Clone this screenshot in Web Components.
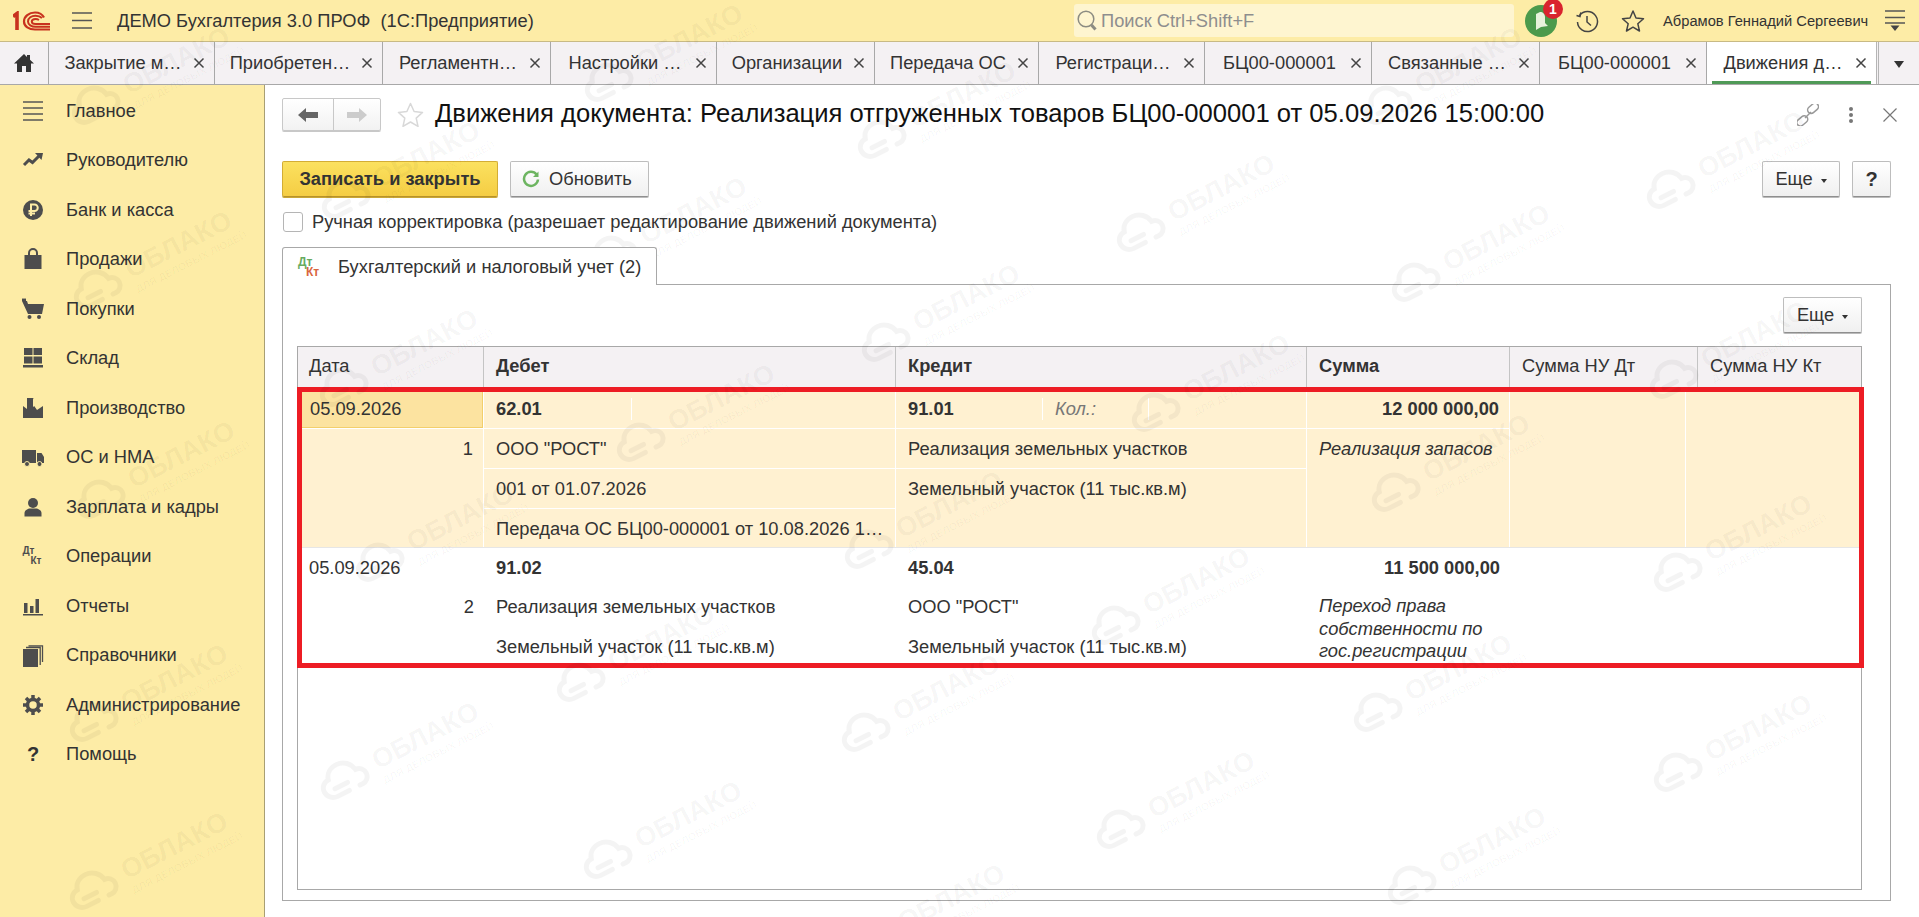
<!DOCTYPE html>
<html lang="ru">
<head>
<meta charset="utf-8">
<title>Движения документа</title>
<style>
  html, body { margin: 0; height: 100%; overflow: hidden; background: #fff; }
  body { font: 18.300px "Liberation Sans", Arial, sans-serif; color: #333; }
</style>
</head>
<body>
<app-shell>
  <top-bar slot="top"></top-bar>
  <tab-strip slot="tabs">
    <tab-item style="width:166px">Закрытие м…</tab-item>
    <tab-item style="width:168px">Приобретен…</tab-item>
    <tab-item style="width:168px">Регламентн…</tab-item>
    <tab-item style="width:166px">Настройки …</tab-item>
    <tab-item style="width:158px">Организации</tab-item>
    <tab-item style="width:164px">Передача ОС</tab-item>
    <tab-item style="width:166px">Регистраци…</tab-item>
    <tab-item style="width:167px">БЦ00-000001</tab-item>
    <tab-item style="width:168px">Связанные …</tab-item>
    <tab-item style="width:167px">БЦ00-000001</tab-item>
    <tab-item style="width:169px" active>Движения д…</tab-item>
  </tab-strip>
  <side-menu slot="side"></side-menu>
  <doc-view slot="main"></doc-view>
  <water-marks slot="over"></water-marks>
</app-shell>

<script>
// app frame: top bar, tabs, then sidebar + content
class AppShell extends HTMLElement {
  constructor() {
    super();
    this.attachShadow({ mode: 'open' });
    this.shadowRoot.innerHTML = `
      <style>
        :host { display: grid; position: relative; height: 917px; width: 1919px; overflow: hidden;
          grid-template-columns: 265px 1fr; grid-template-rows: 42px 43px 1fr; }
        .t { grid-column: 1 / 3; }
      </style>
      <div class="t"><slot name="top"></slot></div>
      <div class="t"><slot name="tabs"></slot></div>
      <slot name="side"></slot>
      <slot name="main"></slot>
      <slot name="over"></slot>`;
  }
}

class TopBar extends HTMLElement {
  constructor() {
    super();
    this.attachShadow({ mode: 'open' });
    this.shadowRoot.innerHTML = `
      <style>
        :host { display: flex; align-items: center; height: 41px; background: #fdeca6; border-bottom: 1px solid #c8ba84; color: #333; }
        svg { display: block; flex: none; }
        .logo { margin-left: 13px; }
        .burger { margin-left: 21px; }
        .name { margin-left: 25px; white-space: pre; width: 957px; }
        .search { display: flex; align-items: center; box-sizing: border-box; width: 440px; height: 33px; background: #fef5d0; border-radius: 3px; padding-left: 3px; color: #8e8e8e; }
        .search span { margin-left: 3px; }
        .bell { position: relative; margin-left: 11px; width: 32px; height: 32px; }
        .badge { position: absolute; left: 18px; top: -6px; width: 20px; height: 20px; border-radius: 50%; background: #d9232e; color: #fff; font: bold 14px/20px "Liberation Sans", sans-serif; text-align: center; }
        .hist { margin-left: 18px; }
        .star { margin-left: 22px; }
        .user { margin-left: 18px; font-size: 14.700px; white-space: nowrap; width: 222px; }
      </style>
      <svg class="logo" width="38" height="20" viewBox="0 0 38 20" fill="none" stroke="#c8321e">
        <path d="M0 5.500 4 2.500V19" stroke-width="3.600"/><path d="M31 6.500C29.500 3.500 26 1.500 22 1.500 16 1.500 11 5.500 11 10.500 11 15.500 16 18.500 22 18.500H37" stroke-width="2.200"/>
        <path d="M29 7C27.500 5.500 25 4.700 22.500 4.700 18.500 4.700 15 7 15 10.500 15 13.700 18.500 15.800 22.500 15.800H37" stroke-width="2"/>
        <path d="M26 9C25 8.400 24 8 22.700 8 20.500 8 18.800 9 18.800 10.500 18.800 12 20.500 13 22.700 13H37" stroke-width="2"/>
      </svg>
      <svg class="burger" width="20" height="17" viewBox="0 0 20 17" stroke="#555" stroke-width="1.600"><path d="M0 1h20M0 8.500h20M0 16h20"/></svg>
      <div class="name">ДЕМО Бухгалтерия 3.0 ПРОФ  (1С:Предприятие)</div>
      <div class="search">
        <svg width="21" height="23" viewBox="0 0 21 23" fill="none" stroke="#8c8c82" stroke-width="1.500"><circle cx="9" cy="10" r="7.800"/><path d="M14.500 16l4 4.500" stroke-width="3"/></svg>
        <span>Поиск Ctrl+Shift+F</span>
      </div>
      <div class="bell">
        <svg width="32" height="32" viewBox="0 0 32 32"><circle cx="16" cy="16" r="16" fill="#4c9a4c"/><path d="M11 25V9l4-2c3 0 5 2 5 5v6l3 3-7 1z" fill="#e8f2dc"/></svg>
        <div class="badge">1</div>
      </div>
      <svg class="hist" width="24" height="24" viewBox="0 0 24 24" fill="none" stroke="#444" stroke-width="1.500"><path d="M4.500 6.500A10 10 0 1 1 2.500 13"/><path d="M1.500 6.500l3.500 1 .8-4" /><path d="M12 7v6l4 3.500"/></svg>
      <svg class="star" width="24" height="24" viewBox="0 0 24 24" fill="none" stroke="#444" stroke-width="1.500" stroke-linejoin="round"><path d="M12 2l3 7 7.500.7-5.700 5 1.700 7.300L12 18.200 5.500 22l1.700-7.300-5.700-5L9 9z"/></svg>
      <div class="user">Абрамов Геннадий Сергеевич</div>
      <svg width="20" height="22" viewBox="0 0 20 22" stroke="#555" stroke-width="1.500"><path d="M0 1h20M0 7.500h20M0 13h20"/><path d="M5.500 15.500h9L10 21z" fill="#444" stroke="none"/></svg>`;
  }
}

class TabStrip extends HTMLElement {
  constructor() {
    super();
    this.attachShadow({ mode: 'open' });
    this.shadowRoot.innerHTML = `
      <style>
        :host { display: flex; height: 42px; background: #f4f1f3; border-bottom: 1px solid #a8a8a8; }
        .home { box-sizing: border-box; width: 49px; border-right: 1px solid #a8a8a8; display: flex; align-items: center; justify-content: center; }
        .more { flex: 1; border-left: 3px double #b5b5b5; display: flex; align-items: center; justify-content: center; }
        .more i { border: 5px solid transparent; border-top: 7px solid #333; border-bottom: 0; margin-top: 2px; }
      </style>
      <div class="home"><svg width="20" height="18" viewBox="0 0 20 18" fill="#333"><path d="M10 0 0 9.500h3V18h5v-6h4v6h5V9.500h3L16 5.800V1h-3v2z"/></svg></div>
      <slot></slot>
      <div class="more"><i></i></div>`;
  }
}

class TabItem extends HTMLElement {
  constructor() {
    super();
    this.attachShadow({ mode: 'open' });
    this.shadowRoot.innerHTML = `
      <style>
        :host { box-sizing: border-box; flex: none; display: flex; align-items: center; position: relative; border-right: 1px solid #a8a8a8; padding-left: 12px; padding-right: 9px; white-space: nowrap; color: #333; }
        :host([active]) { background: #fff; border-right: 0; }
        :host([active])::after { content: ""; position: absolute; left: 5px; right: 5px; bottom: 0; height: 3px; background: #4f9a57; }
        .txt { flex: 1; text-align: center; }
        svg { flex: none; margin-left: 8px; display: block; }
      </style>
      <div class="txt"><slot></slot></div>
      <svg width="12" height="12" viewBox="0 0 12 12" stroke="#444" stroke-width="1.500"><path d="M1.500 1.500l9 9M10.500 1.500l-9 9"/></svg>`;
  }
}

class MenuItem extends HTMLElement {
  constructor() {
    super();
    this.attachShadow({ mode: 'open' });
    this.shadowRoot.innerHTML = `
      <style>
        :host { display: flex; align-items: center; height: 49.500px; color: #333; }
        .ic { width: 66px; display: flex; justify-content: center; flex: none; }
      </style>
      <div class="ic"><slot name="icon"></slot></div>
      <slot></slot>`;
  }
}

const ICONS = {
  main: '<path d="M0 1h20M0 7h20M0 13h20M0 19h20" stroke="#555" stroke-width="1.500" fill="none"/>',
  chief: '<path d="M1 15l5-5 3.500 2.500L16 6" fill="none" stroke="#4d4d4d" stroke-width="3"/><path d="M12 3h8l-1.500 7z" fill="#4d4d4d"/>',
  bank: '<circle cx="10" cy="10" r="10" fill="#4d4d4d"/><path d="M8 16V4.500h3.500a3.200 3.200 0 0 1 0 6.500H5.500M5.500 13.500h6.500" fill="none" stroke="#fdeca6" stroke-width="2"/>',
  sales: '<path d="M1.500 6h17v14h-17z" fill="#4d4d4d"/><path d="M6 9V4a4 4 0 0 1 8 0v5" fill="none" stroke="#4d4d4d" stroke-width="2"/>',
  buy: '<path d="M-1 2h5l1 3h16l-2 10H5z" fill="#4d4d4d"/><path d="M-1 .8h4" stroke="#4d4d4d" stroke-width="2.500"/><circle cx="6.500" cy="18" r="2" fill="#4d4d4d"/><circle cx="16" cy="18" r="2" fill="#4d4d4d"/>',
  store: '<path d="M1 0h8.500v7H1zM10.500 0H19v7h-8.500zM1 8.500h8.500v7H1zM10.500 8.500H19v7h-8.500zM0 17h20v2.500H0z" fill="#4d4d4d"/>',
  prod: '<path d="M0 20V8l4 3V0h6.500v7L14 12l6-4v12z" fill="#4d4d4d"/><path d="M10 0l4 6-4 3z" fill="#fdeca6"/>',
  os: '<path d="M-1 3h14v13H-1z" fill="#4d4d4d"/><path d="M14 6h4.500L21 10v6h-7z" fill="#4d4d4d"/><circle cx="4" cy="17" r="2.500" fill="#4d4d4d" stroke="#fdeca6"/><circle cx="16.500" cy="17" r="2.500" fill="#4d4d4d" stroke="#fdeca6"/>',
  staff: '<circle cx="10" cy="6" r="5" fill="#4d4d4d"/><path d="M1.500 19.500v-3.500c0-3 4-4.500 5-4.500h7c1 0 5 1.500 5 4.500v3.500z" fill="#4d4d4d"/>',
  rep: '<path d="M1 7h3.500v10H1zM7 10h3.500v7H7zM12.500 3H16v14h-3.500zM0 18h20v1.500H0z" fill="#4d4d4d"/>',
  ref: '<path d="M0 4h15v18H0z" fill="#4d4d4d"/><path d="M3 2.500h14.200V20M5.500.8h14V17" fill="none" stroke="#4d4d4d" stroke-width="1.300"/>',
  gear: '<circle cx="10" cy="10" r="5.500" fill="none" stroke="#4d4d4d" stroke-width="3.500"/><path d="M10 0v4M10 16v4M0 10h4M16 10h4M3 3l3 3M14 14l3 3M17 3l-3 3M6 14l-3 3" stroke="#4d4d4d" stroke-width="3.500"/>'
};

class SideMenu extends HTMLElement {
  constructor() {
    super();
    this.attachShadow({ mode: 'open' });
    const ic = (k) => `<svg slot="icon" width="20" height="20" viewBox="0 0 20 20" style="overflow:visible">${ICONS[k]}</svg>`;
    const rows = [
      ['main', 'Главное'], ['chief', 'Руководителю'], ['bank', 'Банк и касса'], ['sales', 'Продажи'],
      ['buy', 'Покупки'], ['store', 'Склад'], ['prod', 'Производство'], ['os', 'ОС и НМА'], ['staff', 'Зарплата и кадры'],
      ['dtkt', 'Операции'], ['rep', 'Отчеты'], ['ref', 'Справочники'], ['gear', 'Администрирование'], ['help', 'Помощь']
    ];
    const html = rows.map(([k, t]) => {
      let icon;
      if (k === 'dtkt') icon = '<span slot="icon" style="font:bold 10px/10px \'Liberation Sans\',sans-serif;color:#4d4d4d;width:21px;display:block">Дт<br><span style="margin-left:8px">Кт</span></span>';
      else if (k === 'help') icon = '<span slot="icon" style="font:bold 20px \'Liberation Sans\',sans-serif;color:#333">?</span>';
      else icon = ic(k);
      return `<menu-item>${icon}${t}</menu-item>`;
    }).join('');
    this.shadowRoot.innerHTML = `
      <style>
        :host { display: block; background: #fdeca6; border-right: 1px solid #a99f73; padding-top: 1px; box-sizing: border-box; height: 832px; }
      </style>${html}`;
  }
}

class UiButton extends HTMLElement {
  constructor() {
    super();
    this.attachShadow({ mode: 'open' });
    this.shadowRoot.innerHTML = `
      <style>
        :host { box-sizing: border-box; display: inline-flex; align-items: center; justify-content: center; height: 36px; padding: 0 12px; gap: 8px;
          border: 1px solid #bdbdbd; border-bottom-color: #8f8f8f; border-radius: 2px; background: linear-gradient(#fff, #f0f0f0); box-shadow: 0 1px 0 #bbb; color: #333; white-space: nowrap; }
        :host([primary]) { background: linear-gradient(#fbe15f, #f5cd44); border-color: #d3ad35; border-bottom-color: #b8922a; font-weight: bold; box-shadow: 0 1px 0 #c9a636; }
      </style>
      <slot name="icon"></slot><slot></slot>`;
  }
}

class DocView extends HTMLElement {
  constructor() {
    super();
    this.attachShadow({ mode: 'open' });
    this.shadowRoot.innerHTML = `
      <style>
        :host { display: block; box-sizing: border-box; height: 832px; padding: 13px 28px 0 17px; background: #fff; color: #333; }
        .head { display: flex; align-items: center; height: 33px; }
        .nav { display: flex; box-sizing: border-box; width: 99px; height: 33px; border: 1px solid #c8c8c8; border-radius: 2px; box-shadow: 0 1px 0 #c8c8c8; background: linear-gradient(#fff, #f2f2f2); }
        .nav div { display: flex; align-items: center; justify-content: center; }
        .nav .b { width: 50px; border-right: 1px solid #c8c8c8; }
        .nav .f { flex: 1; }
        .fav { margin-left: 16px; flex: none; }
        h1 { margin: -2px 0 0 11px; font: normal 25.600px "Liberation Sans", sans-serif; color: #111; white-space: nowrap; flex: 1; }
        .tools { display: flex; align-items: center; gap: 29px; margin-right: -6px; }
        .tools svg { display: block; }
        .bar { display: flex; gap: 12px; margin-top: 30px; }
        .bar .sp { flex: 1; }
        .chk { display: flex; align-items: center; margin-top: 15px; height: 20px; }
        .chk i { box-sizing: border-box; width: 20px; height: 20px; border: 1px solid #b5b5b5; border-radius: 3px; background: #fff; margin: 0 9px 0 1px; }
        .tab { position: relative; z-index: 1; display: flex; align-items: center; box-sizing: border-box; width: 375px; height: 38px; margin-top: 15px; padding-left: 15px; background: #fff; border: 1px solid #a8a8a8; border-bottom: 0; border-radius: 3px 3px 0 0; }
        .dk { width: 26px; font: bold 12px/10px "Liberation Sans", sans-serif; color: #68ab5f; margin-right: 14px; }
        .dk span { display: block; margin-left: 8px; color: #d9663f; }
        .panel { box-sizing: border-box; margin-top: -1px; height: 617px; border: 1px solid #a8a8a8; padding: 12px 28px 0 14px; }
        .pbar { display: flex; justify-content: flex-end; height: 36px; margin-bottom: 13px; }
        .arr { border: 3.500px solid transparent; border-top: 4px solid #333; border-bottom: 0; margin-top: 3px; }
      </style>
      <div class="head">
        <div class="nav">
          <div class="b"><svg width="20" height="14" viewBox="0 0 20 14" fill="#666"><path d="M0 7 8 0v4h12v6H8v4z"/></svg></div>
          <div class="f"><svg width="20" height="14" viewBox="0 0 20 14" fill="#ccc"><path d="M20 7 12 0v4H0v6h12v4z"/></svg></div>
        </div>
        <svg class="fav" width="27" height="25" viewBox="0 0 27 25" fill="none" stroke="#d8d8d8" stroke-width="1.500" stroke-linejoin="round"><path d="M13.500 1.500l3.600 8 8.400.9-6.300 5.700 1.800 8.200-7.500-4.300L6 24.300l1.800-8.200-6.300-5.700 8.400-.9z"/></svg>
        <h1>Движения документа: Реализация отгруженных товаров БЦ00-000001 от 05.09.2026 15:00:00</h1>
        <div class="tools">
          <svg width="22" height="22" viewBox="0 0 22 22" fill="none" stroke="#999" stroke-width="1.500"><rect x="10.500" y="1" width="12" height="7" rx="3.500" transform="rotate(-40 16 5)"/><rect x="-.5" y="13" width="12" height="7" rx="3.500" transform="rotate(-40 6 17)"/><path d="M8 14l6-6"/></svg>
          <svg width="6" height="18" viewBox="0 0 6 18" fill="#777"><circle cx="3" cy="3" r="2"/><circle cx="3" cy="9" r="2"/><circle cx="3" cy="15" r="2"/></svg>
          <svg width="14" height="14" viewBox="0 0 14 14" stroke="#777" stroke-width="1.200"><path d="M.5.500l13 13M13.500.500l-13 13"/></svg>
        </div>
      </div>
      <div class="bar">
        <ui-button primary style="width:216px">Записать и закрыть</ui-button>
        <ui-button style="width:139px;justify-content:flex-start;padding-left:11px;gap:9px">
          <svg slot="icon" width="18" height="18" viewBox="0 0 18 18" fill="none" stroke="#6db561" stroke-width="2.500"><path d="M14.500 4.500A7 7 0 1 0 16 9.500"/><path d="M16.500 1.500v5.500H11z" fill="#6db561" stroke="none"/></svg>
          Обновить</ui-button>
        <div class="sp"></div>
        <ui-button style="width:78px">Еще<span class="arr"></span></ui-button>
        <ui-button style="width:39px;font-weight:bold;font-size:20px">?</ui-button>
      </div>
      <div class="chk"><i></i>Ручная корректировка (разрешает редактирование движений документа)</div>
      <div class="tab"><div class="dk">Дт<span>Кт</span></div>Бухгалтерский и налоговый учет (2)</div>
      <div class="panel">
        <div class="pbar"><ui-button style="width:79px">Еще<span class="arr"></span></ui-button></div>
        <entries-table></entries-table>
      </div>`;
  }
}

class EntriesTable extends HTMLElement {
  constructor() {
    super();
    this.attachShadow({ mode: 'open' });
    this.shadowRoot.innerHTML = `
      <style>
        :host { display: block; position: relative; box-sizing: border-box; height: 544px; border: 1px solid #a8a8a8; background: transparent; color: #333; }
        .hd { display: grid; grid-template-columns: 186px 412px 411px 203px 188px 1fr; height: 42px; background: #f4f1f3; }
        .hd div { display: flex; align-items: center; padding: 0 0 4px 12px; border-right: 1px solid #c4c4c4; box-sizing: border-box; }
        .hd div:first-child { padding-left: 11px; }
        .hd div:last-child { border-right: 0; }
        .row { display: grid; grid-template-columns: 186px 412px 411px 203px 176px 1fr; }
        .r1 { grid-template-rows: repeat(4, 40px); background: #fff1d1; }
        .r2 { grid-template-rows: 39px 40px 40px; margin-top: -2px; border-top: 1px solid #e6e6e6; background: #fff; position: relative; }
        .c { display: flex; align-items: center; padding: 0 0 0 12px; box-sizing: border-box; white-space: nowrap; min-width: 0; }
        .r1 .c { border-right: 1px solid #fff; border-bottom: 1px solid #fff; }
        .d { padding-left: 11px; }
        .sel { background: #fce3a0; box-shadow: inset 0 0 0 1px #f3cf6b; padding-left: 12px; }
        .n { justify-content: flex-end; align-items: flex-start; padding: 9px 10px 0 0; }
        .num { justify-content: flex-end; font-weight: bold; padding-right: 10px; }
        .memo { align-items: flex-start; padding-top: 9px; font-style: italic; white-space: normal; line-height: 22.500px; }
        .sub { display: grid; grid-template-columns: 148px 105px 1fr; padding: 0; }
        .sub span { display: flex; align-items: center; padding-left: 12px; border-right: 1px solid #fff; }
        .sub span:last-child { border-right: 0; }
        .sub2 { grid-template-columns: 147px 106px 1fr; }
        .kol { font-style: italic; color: #777; padding-left: 13px; }
        .mark { position: absolute; left: -1px; top: 40px; width: 1567px; height: 281px; box-sizing: border-box; border: 5px solid #ed1c24; pointer-events: none; }
      </style>
      <div class="hd">
        <div>Дата</div><div><b>Дебет</b></div><div><b>Кредит</b></div><div><b>Сумма</b></div><div>Сумма НУ Дт</div><div>Сумма НУ Кт</div>
      </div>
      <div class="row r1">
        <div class="c sel">05.09.2026</div>
        <div class="c sub"><span><b>62.01</b></span><span></span><span></span></div>
        <div class="c sub sub2"><span><b>91.01</b></span><span class="kol">Кол.:</span><span></span></div>
        <div class="c num">12 000 000,00</div>
        <div class="c" style="grid-row:1 / 5;grid-column:5"></div>
        <div class="c" style="grid-row:1 / 5;grid-column:6;border-right:0"></div>
        <div class="c n" style="grid-row:2 / 5;grid-column:1">1</div>
        <div class="c" style="grid-row:2;grid-column:2">ООО "РОСТ"</div>
        <div class="c" style="grid-row:2;grid-column:3">Реализация земельных участков</div>
        <div class="c memo" style="grid-row:2 / 5;grid-column:4">Реализация запасов</div>
        <div class="c" style="grid-row:3;grid-column:2">001 от 01.07.2026</div>
        <div class="c memo" style="grid-row:3 / 5;grid-column:3;font-style:normal">Земельный участок (11 тыс.кв.м)</div>
        <div class="c" style="grid-row:4;grid-column:2">Передача ОС БЦ00-000001 от 10.08.2026 1…</div>
      </div>
      <div class="row r2">
        <div class="c d">05.09.2026</div>
        <div class="c"><b>91.02</b></div>
        <div class="c"><b>45.04</b></div>
        <div class="c num">11 500 000,00</div>
        <div class="c n" style="grid-row:2 / 4;grid-column:1">2</div>
        <div class="c" style="grid-row:2;grid-column:2">Реализация земельных участков</div>
        <div class="c" style="grid-row:2;grid-column:3">ООО "РОСТ"</div>
        <div class="c memo" style="grid-row:2 / 4;grid-column:4;padding-top:8px">Переход права собственности по гос.регистрации</div>
        <div class="c" style="grid-row:3;grid-column:2">Земельный участок (11 тыс.кв.м)</div>
        <div class="c" style="grid-row:3;grid-column:3">Земельный участок (11 тыс.кв.м)</div>
      </div>
      <div class="mark"></div>`;
  }
}

// one "ОБЛАКО" stamp, drawn around its word centre
class WaterMark extends HTMLElement {
  constructor() {
    super();
    this.attachShadow({ mode: 'open' });
    this.shadowRoot.innerHTML = `
      <style>
        :host { position: absolute; left: var(--x); top: var(--y); width: 0; height: 0; pointer-events: none; color: rgba(0,0,0,.045); font-family: "Liberation Sans", sans-serif; }
        .b { position: absolute; left: -60px; top: -18px; width: 130px; transform: rotate(-27deg); transform-origin: 60px 18px; }
        .w { font: bold 27px/28px "Liberation Sans", sans-serif; }
        .s { font: bold 10.500px/12px "Liberation Sans", sans-serif; color: rgba(0,0,0,.032); white-space: nowrap; margin-top: 1px; }
        svg { position: absolute; left: -112px; top: 22px; transform: rotate(-27deg); }
      </style>
      <div class="b"><div class="w">ОБЛАКО</div><div class="s">ДЛЯ ДЕЛОВЫХ ЛЮДЕЙ</div></div>
      <svg width="52" height="36" viewBox="0 0 52 36" fill="none" stroke="rgba(0,0,0,.045)" stroke-width="5" stroke-linecap="round"><path d="M26 32H13C7 32 3 27 3 22s4-9 9-9c1.500-6 7-10 14-10 8 0 14 6 15 13 5 0 8 4 8 8 0 5-4 8-8 8h-3M14 24h14"/></svg>`;
  }
}

class WaterMarks extends HTMLElement {
  constructor() {
    super();
    this.attachShadow({ mode: 'open' });
    const spots = [
      [180,63],[182,247],[185,457],[178,680],[178,848],
      [430,157],[428,345],[464,520],[429,738],
      [693,40],[697,213],[725,400],[665,640],[692,817],
      [966,97],[970,300],[953,507],[950,690],[955,900],
      [1225,190],[1240,370],[1200,583],[1205,787],
      [1472,63],[1500,240],[1480,450],[1462,670],[1496,843],
      [1755,147],[1758,337],[1762,530],[1762,730],
    ];
    this.shadowRoot.innerHTML = `<style>:host { position: absolute; inset: 0; pointer-events: none; overflow: hidden; }</style>` +
      spots.map(([x, y]) => `<water-mark style="--x:${x}px;--y:${y}px"></water-mark>`).join('');
  }
}

customElements.define('app-shell', AppShell);
customElements.define('top-bar', TopBar);
customElements.define('tab-strip', TabStrip);
customElements.define('tab-item', TabItem);
customElements.define('menu-item', MenuItem);
customElements.define('side-menu', SideMenu);
customElements.define('ui-button', UiButton);
customElements.define('doc-view', DocView);
customElements.define('entries-table', EntriesTable);
customElements.define('water-mark', WaterMark);
customElements.define('water-marks', WaterMarks);
</script>
</body>
</html>
